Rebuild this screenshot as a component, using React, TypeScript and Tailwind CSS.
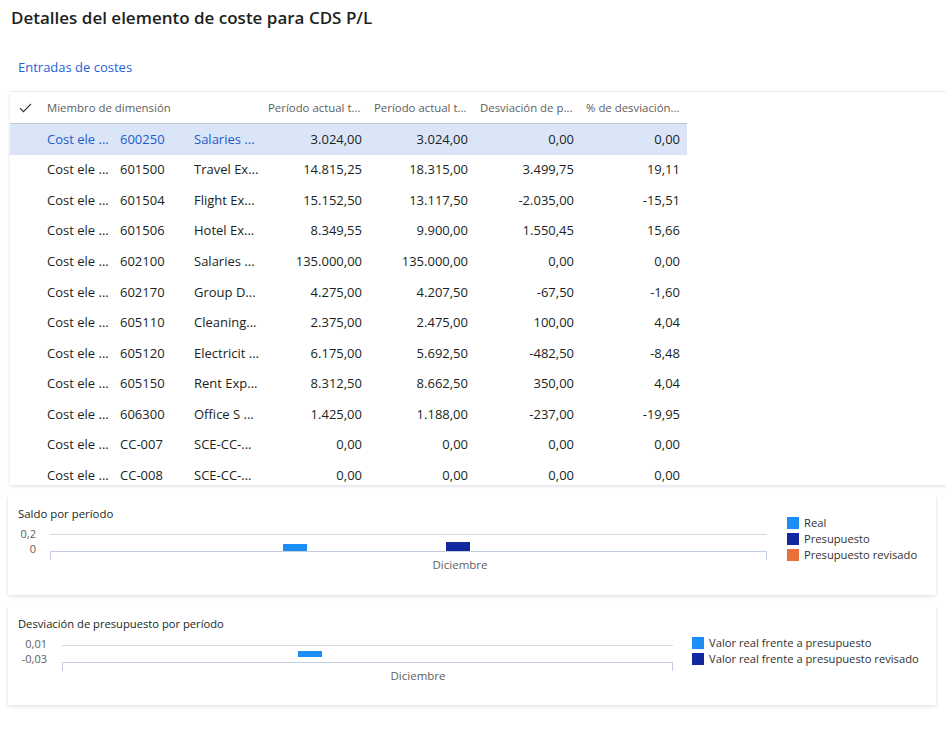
import React from "react";

type Row = {
  a: string;
  b: string;
  c: string;
  v: [string, string, string, string];
  selected?: boolean;
};

const rows: Row[] = [
  { a: "Cost ele ...", b: "600250", c: "Salaries  ...", v: ["3.024,00", "3.024,00", "0,00", "0,00"], selected: true },
  { a: "Cost ele ...", b: "601500", c: "Travel Ex...", v: ["14.815,25", "18.315,00", "3.499,75", "19,11"] },
  { a: "Cost ele ...", b: "601504", c: "Flight Ex...", v: ["15.152,50", "13.117,50", "-2.035,00", "-15,51"] },
  { a: "Cost ele ...", b: "601506", c: "Hotel Ex...", v: ["8.349,55", "9.900,00", "1.550,45", "15,66"] },
  { a: "Cost ele ...", b: "602100", c: "Salaries  ...", v: ["135.000,00", "135.000,00", "0,00", "0,00"] },
  { a: "Cost ele ...", b: "602170", c: "Group D...", v: ["4.275,00", "4.207,50", "-67,50", "-1,60"] },
  { a: "Cost ele ...", b: "605110", c: "Cleaning...", v: ["2.375,00", "2.475,00", "100,00", "4,04"] },
  { a: "Cost ele ...", b: "605120", c: "Electricit ...", v: ["6.175,00", "5.692,50", "-482,50", "-8,48"] },
  { a: "Cost ele ...", b: "605150", c: "Rent Exp...", v: ["8.312,50", "8.662,50", "350,00", "4,04"] },
  { a: "Cost ele ...", b: "606300", c: "Office S  ...", v: ["1.425,00", "1.188,00", "-237,00", "-19,95"] },
  { a: "Cost ele ...", b: "CC-007", c: "SCE-CC-...", v: ["0,00", "0,00", "0,00", "0,00"] },
  { a: "Cost ele ...", b: "CC-008", c: "SCE-CC-...", v: ["0,00", "0,00", "0,00", "0,00"] },
];

const numHeaders = ["Período actual t...", "Período actual t...", "Desviación de p...", "% de desviación..."];

const card =
  "bg-white shadow-[0_1.6px_3.6px_rgba(0,0,0,0.13),0_0.3px_0.9px_rgba(0,0,0,0.11)]";

function Legend({ items }: { items: { color: string; label: string }[] }) {
  return (
    <div className="flex flex-col">
      {items.map((it) => (
        <div key={it.label} className="flex h-[16px] items-center gap-[5px] text-[11.2px] text-[#323130]">
          <span className="h-[12px] w-[12px] flex-none" style={{ background: it.color }} />
          <span className="whitespace-nowrap">{it.label}</span>
        </div>
      ))}
    </div>
  );
}

export default function App() {
  return (
    <div className="h-[756px] w-[946px] overflow-hidden bg-white font-['Segoe_UI','Open_Sans',sans-serif] text-[#201f1e]">
      <h1 className="pl-[11px] pt-[6px] text-[17px] font-semibold leading-[24px] text-[#201f1e]">
        Detalles del elemento de coste para CDS P/L
      </h1>
      <div className="mt-[28px] pl-[18px] text-[13px] leading-[18px] text-[#1f63d8]">Entradas de costes</div>

      {/* grid */}
      <div className={`ml-[10px] mt-[15px] h-[394px] overflow-hidden border-t border-[#edebe9] ${card}`}>
        <div className="w-[677px]">
          <div className="flex h-[32px] items-center border-b border-[#c8c6c4] text-[11.4px] text-[#605e5c]">
            <div className="flex w-[30px] justify-center">
              <svg width="13" height="10" viewBox="0 0 13 10" fill="none">
                <path d="M1 5.2L4.4 8.6L12 1" stroke="#323130" strokeWidth="1.1" />
              </svg>
            </div>
            <div className="w-[220px] whitespace-nowrap pl-[7px]">Miembro de dimensión</div>
            {numHeaders.map((h, i) => (
              <div key={i} className="w-[106px] whitespace-nowrap pl-[8px]">
                {h}
              </div>
            ))}
          </div>
          {rows.map((r, i) => (
            <div
              key={i}
              className={`flex h-[30.6px] items-center text-[13px] ${r.selected ? "bg-[#dae5f8]" : ""}`}
            >
              <div className="w-[30px]" />
              <div className={`flex w-[220px] ${r.selected ? "text-[#1e5bc6]" : "text-[#201f1e]"}`}>
                <div className="w-[74px] whitespace-nowrap pl-[7px]">{r.a}</div>
                <div className="w-[74px] whitespace-nowrap pl-[6px]">{r.b}</div>
                <div className="w-[72px] whitespace-nowrap pl-[6px]">{r.c}</div>
              </div>
              {r.v.map((v, j) => (
                <div key={j} className="w-[106px] pr-[4px] text-right">
                  {v}
                </div>
              ))}
            </div>
          ))}
        </div>
      </div>

      {/* Saldo por período */}
      <div className={`ml-[8px] mt-[10px] flex h-[100px] w-[928px] pl-[10px] ${card}`}>
        <div className="w-[769px] flex-none">
          <div className="pt-[11px] text-[11.4px] leading-[16px] text-[#201f1e]">Saldo por período</div>
          <div className="mt-[4px] flex">
            <div className="w-[18px] text-right text-[11px] leading-[15px] text-[#605e5c]">
              <div>0,2</div>
              <div>0</div>
            </div>
            <svg className="ml-[14px]" width="718" height="50">
              <line x1="0" y1="8.5" x2="717" y2="8.5" stroke="#dadada" />
              <line x1="0" y1="25.5" x2="717" y2="25.5" stroke="#c3cee0" />
              <line x1="0.5" y1="25" x2="0.5" y2="34" stroke="#c3cee0" />
              <line x1="716.5" y1="25" x2="716.5" y2="34" stroke="#c3cee0" />
              <rect x="233" y="18" width="24" height="7" fill="#1b8ef8" />
              <rect x="396" y="16" width="24" height="9" fill="#13279e" />
              <text
                x="410"
                y="43"
                textAnchor="middle"
                fontSize="11.5"
                fill="#605e5c"
                fontFamily="Segoe UI, Open Sans, sans-serif"
              >
                Diciembre
              </text>
            </svg>
          </div>
        </div>
        <div className="pt-[20px]">
          <Legend
            items={[
              { color: "#1b8ef8", label: "Real" },
              { color: "#13279e", label: "Presupuesto" },
              { color: "#e8703a", label: "Presupuesto revisado" },
            ]}
          />
        </div>
      </div>

      {/* Desviación de presupuesto por período */}
      <div className={`ml-[8px] mt-[10px] flex h-[100px] w-[928px] pl-[10px] ${card}`}>
        <div className="w-[674px] flex-none">
          <div className="pt-[11px] text-[11.2px] leading-[16px] text-[#201f1e]">
            Desviación de presupuesto por período
          </div>
          <div className="mt-[4px] flex">
            <div className="w-[29px] text-right text-[11px] leading-[15px] text-[#605e5c]">
              <div>0,01</div>
              <div>-0,03</div>
            </div>
            <svg className="ml-[15px]" width="612" height="50">
              <line x1="0" y1="9.5" x2="611" y2="9.5" stroke="#dadada" />
              <line x1="0" y1="26.5" x2="611" y2="26.5" stroke="#c3cee0" />
              <line x1="0.5" y1="26" x2="0.5" y2="35" stroke="#c3cee0" />
              <line x1="610.5" y1="26" x2="610.5" y2="35" stroke="#c3cee0" />
              <rect x="236" y="15" width="24" height="6" fill="#1b8ef8" />
              <text
                x="356"
                y="44"
                textAnchor="middle"
                fontSize="11.5"
                fill="#605e5c"
                fontFamily="Segoe UI, Open Sans, sans-serif"
              >
                Diciembre
              </text>
            </svg>
          </div>
        </div>
        <div className="pt-[30px]">
          <Legend
            items={[
              { color: "#1b8ef8", label: "Valor real frente a presupuesto" },
              { color: "#13279e", label: "Valor real frente a presupuesto revisado" },
            ]}
          />
        </div>
      </div>
    </div>
  );
}
